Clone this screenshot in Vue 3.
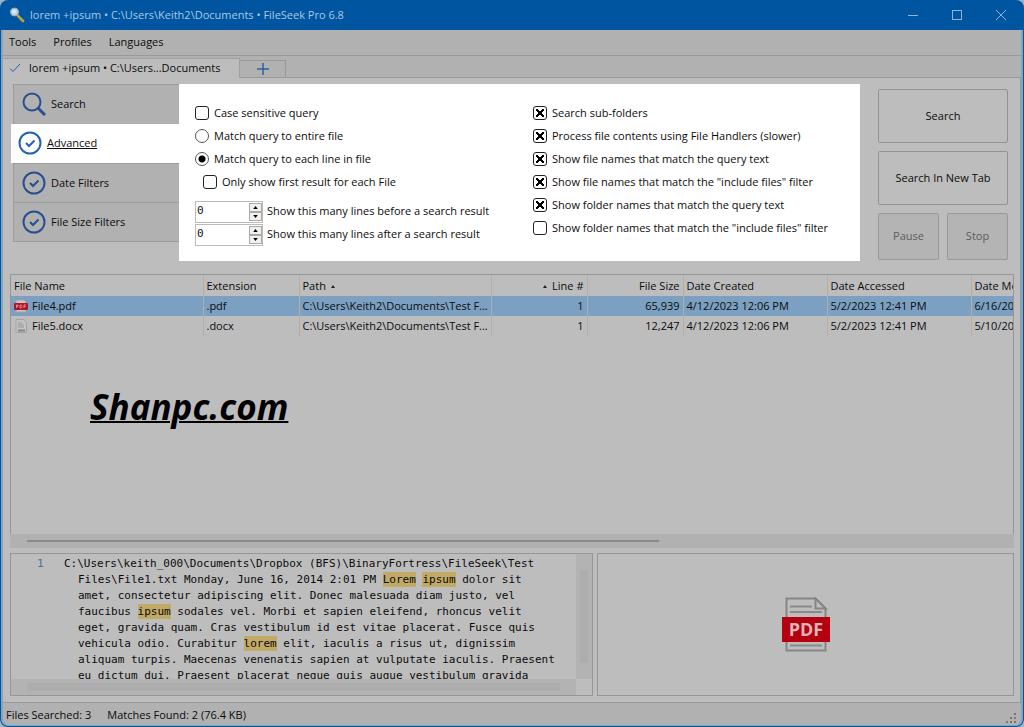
<script setup>
import { ref } from 'vue'

const menus = ['Tools', 'Profiles', 'Languages']
const sections = ['Search', 'Advanced', 'Date Filters', 'File Size Filters']
const active = ref('Advanced')

const caseSensitive = ref(false)
const matchMode = ref('line')
const firstOnly = ref(false)
const before = ref(0)
const after = ref(0)

const options = ref([
  { id: 'sub', label: 'Search sub-folders', on: true },
  { id: 'handlers', label: 'Process file contents using File Handlers (slower)', on: true },
  { id: 'file-query', label: 'Show file names that match the query text', on: true },
  { id: 'file-filter', label: 'Show file names that match the "include files" filter', on: true },
  { id: 'folder-query', label: 'Show folder names that match the query text', on: true },
  { id: 'folder-filter', label: 'Show folder names that match the "include files" filter', on: false }
])

const files = [
  { name: 'File4.pdf', ext: '.pdf', size: '65,939', modified: '6/16/2023', selected: true },
  { name: 'File5.docx', ext: '.docx', size: '12,247', modified: '5/10/2023', selected: false }
]

const lines = [
  'C:\\Users\\keith_000\\Documents\\Dropbox (BFS)\\BinaryFortress\\FileSeek\\Test',
  'Files\\File1.txt Monday, June 16, 2014 2:01 PM *Lorem* *ipsum* dolor sit',
  'amet, consectetur adipiscing elit. Donec malesuada diam justo, vel',
  'faucibus *ipsum* sodales vel. Morbi et sapien eleifend, rhoncus velit',
  'eget, gravida quam. Cras vestibulum id est vitae placerat. Fusce quis',
  'vehicula odio. Curabitur *lorem* elit, iaculis a risus ut, dignissim',
  'aliquam turpis. Maecenas venenatis sapien at vulputate iaculis. Praesent',
  'eu dictum dui. Praesent placerat neque quis augue vestibulum gravida'
].map(line => line.split('*'))
</script>

<template>
  <div class="window">
    <header class="titlebar">
      <svg class="logo" viewBox="0 0 16 16" aria-hidden="true">
        <path d="M9 9l5 5" stroke="#b9a53c" stroke-width="2.6" stroke-linecap="round" />
        <circle cx="5.5" cy="5" r="4" fill="#c3d3de" stroke="#8eaabd" />
        <circle cx="5" cy="4.5" r="2" fill="#dce6ec" />
      </svg>
      <h1>lorem +ipsum • C:\Users\Keith2\Documents • FileSeek Pro 6.8</h1>
      <button type="button" class="caption" aria-label="Minimize">
        <svg viewBox="0 0 12 12"><path d="M1 6.5h10" /></svg>
      </button>
      <button type="button" class="caption" aria-label="Maximize">
        <svg viewBox="0 0 12 12"><rect x="1.5" y="1.5" width="9" height="9" /></svg>
      </button>
      <button type="button" class="caption" aria-label="Close">
        <svg viewBox="0 0 12 12"><path d="M1 1l10 10M11 1L1 11" /></svg>
      </button>
    </header>

    <div class="frame">
      <nav class="menubar">
        <button v-for="m in menus" :key="m" type="button">{{ m }}</button>
      </nav>

      <div class="tabs">
        <button type="button" class="tab current">
          <svg viewBox="0 0 12 12"><path d="M1 6.5l3 3L11 2" /></svg>
          lorem +ipsum • C:\Users...Documents
        </button>
        <button type="button" class="tab add" aria-label="New tab">
          <svg viewBox="0 0 12 12"><path d="M6 0v12M0 6h12" /></svg>
        </button>
        <span class="rest"></span>
      </div>

      <main class="page">
        <section class="query">
          <nav class="side">
            <button
              v-for="s in sections"
              :key="s"
              type="button"
              :class="{ active: s === active }"
              @click="active = s"
            >
              <svg v-if="s === 'Search'" viewBox="0 0 24 24">
                <circle cx="10" cy="10" r="8.500" />
                <path d="M16 16l7 7" class="thick" />
              </svg>
              <svg v-else viewBox="0 0 24 24">
                <circle cx="12" cy="12" r="10.5" />
                <path d="M8 12l3 3 5.500-5.500" />
              </svg>
              <span>{{ s }}</span>
            </button>
          </nav>

          <div class="panel">
            <div class="col">
              <label class="opt"><input v-model="caseSensitive" type="checkbox" />Case sensitive query</label>
              <label class="opt"><input v-model="matchMode" type="radio" name="mode" value="file" />Match query to entire file</label>
              <label class="opt"><input v-model="matchMode" type="radio" name="mode" value="line" />Match query to each line in file</label>
              <label class="opt nested"><input v-model="firstOnly" type="checkbox" />Only show first result for each File</label>
              <div class="spin first">
                <div class="box">
                  <input id="before" v-model="before" type="number" min="0" />
                  <span class="steps">
                    <button type="button" aria-label="More lines before" @click="before++"><svg viewBox="0 0 6 4"><path d="M0 4l3-4 3 4z" /></svg></button>
                    <button type="button" aria-label="Fewer lines before" @click="before > 0 && before--"><svg viewBox="0 0 6 4"><path d="M0 0l3 4 3-4z" /></svg></button>
                  </span>
                </div>
                <label for="before">Show this many lines before a search result</label>
              </div>
              <div class="spin">
                <div class="box">
                  <input id="after" v-model="after" type="number" min="0" />
                  <span class="steps">
                    <button type="button" aria-label="More lines after" @click="after++"><svg viewBox="0 0 6 4"><path d="M0 4l3-4 3 4z" /></svg></button>
                    <button type="button" aria-label="Fewer lines after" @click="after > 0 && after--"><svg viewBox="0 0 6 4"><path d="M0 0l3 4 3-4z" /></svg></button>
                  </span>
                </div>
                <label for="after">Show this many lines after a search result</label>
              </div>
            </div>
            <div class="col">
              <label v-for="o in options" :key="o.id" class="opt"><input v-model="o.on" type="checkbox" />{{ o.label }}</label>
            </div>
          </div>

          <div class="actions">
            <button type="button" class="wide">Search</button>
            <button type="button" class="wide">Search In New Tab</button>
            <button type="button" disabled>Pause</button>
            <button type="button" disabled>Stop</button>
          </div>
        </section>

        <section class="results">
          <table>
            <colgroup>
              <col class="w4" /><col class="w2" /><col class="w4" /><col class="w2" />
              <col class="w2" /><col class="w3" /><col class="w3" /><col class="w3" />
            </colgroup>
            <thead>
              <tr>
                <th>File Name</th>
                <th>Extension</th>
                <th>Path <i class="sort"></i></th>
                <th class="num"><i class="sort"></i> Line #</th>
                <th class="num">File Size</th>
                <th>Date Created</th>
                <th>Date Accessed</th>
                <th>Date Modified</th>
              </tr>
            </thead>
            <tbody>
              <tr v-for="f in files" :key="f.name" :class="{ selected: f.selected }">
                <td>
                  <span class="file">
                    <svg v-if="f.ext === '.pdf'" viewBox="0 0 14 14">
                      <path d="M2 1h8l2 2v10H2z" fill="#c9c6c6" stroke="#a5a0a2" />
                      <rect y="4" width="14" height="7" rx="1" fill="#ae1626" />
                      <path d="M2.5 9V6h1.5v1.5H2.5M6 6v3h1.2l.8-.8V6.700L7.200 6zM10 9V6h2M10 7.500h1.500" fill="none" stroke="#e0a0a6" stroke-width=".8" />
                    </svg>
                    <svg v-else viewBox="0 0 14 14">
                      <path d="M2 .5h7.500L12.500 3v10.500H2z" fill="#c4c4c4" stroke="#a2a2a2" />
                      <path d="M4 4h4M4 6h6M4 8h6" stroke="#969696" />
                      <path d="M4 11.500h7" stroke="#858585" stroke-width="2" />
                    </svg>
                    {{ f.name }}
                  </span>
                </td>
                <td>{{ f.ext }}</td>
                <td>C:\Users\Keith2\Documents\Test F...</td>
                <td class="num">1</td>
                <td class="num">{{ f.size }}</td>
                <td>4/12/2023 12:06 PM</td>
                <td>5/2/2023 12:41 PM</td>
                <td>{{ f.modified }}</td>
              </tr>
              <tr class="blank"><td v-for="n in 8" :key="n"></td></tr>
            </tbody>
          </table>
          <p class="watermark">Shanpc.com</p>
        </section>
        <div class="hscroll"><span></span></div>

        <section class="preview">
          <div class="text">
            <div class="code">
              <span class="lineno">1</span>
              <div class="lines">
                <p v-for="(line, i) in lines" :key="i">
                  <template v-for="(part, j) in line" :key="j"><mark v-if="j % 2">{{ part }}</mark><template v-else>{{ part }}</template></template>
                </p>
              </div>
            </div>
            <div class="vbar"><i></i></div>
            <div class="hbar"><i></i></div>
          </div>
          <div class="picture">
            <svg viewBox="0 0 48 56" role="img" aria-label="PDF file">
              <path d="M4.500 1.500h29l10 10v42h-39z" fill="#bdbdbd" stroke="#858585" stroke-width="2" />
              <path d="M33.500 1.500v10h10z" fill="#bdbdbd" stroke="#858585" stroke-width="2" />
              <path d="M8 9.500h22M8 15h32M8 48.500h32" stroke="#8a8a8a" stroke-width="2" />
              <rect y="20" width="48" height="25" fill="#b4000f" />
              <text x="24" y="39" text-anchor="middle">PDF</text>
            </svg>
          </div>
        </section>
      </main>

      <footer class="status">
        <span>Files Searched: 3</span>
        <span>Matches Found: 2 (76.4 KB)</span>
        <svg class="grip" viewBox="0 0 12 12" aria-hidden="true">
          <path d="M8 0h2v2H8zM4 4h2v2H4zM8 4h2v2H8zM0 8h2v2H0zM4 8h2v2H4zM8 8h2v2H8z" />
        </svg>
      </footer>
    </div>
  </div>
</template>

<style>
html,
body {
  background: #9fb4c8;
}
</style>

<style scoped>
* {
  box-sizing: border-box;
}

.window {
  display: flex;
  flex-direction: column;
  min-height: 100vh;
  overflow: hidden;
  background: #0055a0;
  border-radius: 8px;
  font: 11px/16px "Open Sans", "Noto Sans", sans-serif;
  color: #0c0c0c;
}

button {
  padding: 0;
  border: 0;
  background: none;
  font: inherit;
  color: inherit;
}

.titlebar {
  display: flex;
  align-items: center;
  height: 30px;
  padding: 0 1px 0 9px;
  color: #a9c9e6;
}

.logo {
  width: 16px;
  height: 16px;
  margin-right: 5px;
  fill: none;
}

h1 {
  flex: 1;
  margin: 0;
  font: inherit;
}

.caption {
  width: 44px;
  height: 30px;
}

.caption svg {
  display: block;
  width: 12px;
  height: 12px;
  margin: auto;
  fill: none;
  stroke: #8db5da;
}

.frame {
  display: flex;
  flex: 1;
  flex-direction: column;
  margin: 0 1px 1px;
  border: solid #84a5c0;
  border-width: 0 2px 1px;
  border-radius: 0 0 7px 7px;
  background: #b1b1b1;
}

.menubar {
  display: flex;
  gap: 17px;
  height: 26px;
  padding: 0 6px 2px;
  border-bottom: 1px solid #999;
}

.tabs {
  display: flex;
  align-items: flex-end;
  height: 22px;
}

.tab {
  display: flex;
  align-items: center;
}

.tab svg {
  width: 12px;
  height: 12px;
  fill: none;
  stroke: #2f5f9e;
}

.current {
  gap: 8px;
  width: 237px;
  height: 20px;
  padding: 0 0 2px 6px;
  border: solid #a0a0a0;
  border-width: 1px 1px 0 0;
  background: #bdbdbd;
}

.add {
  justify-content: center;
  width: 46px;
  height: 18px;
  border: solid #999;
  border-width: 1px 1px 1px 0;
}

.add svg {
  stroke-width: 1.5;
}

.rest {
  flex: 1;
  border-bottom: 1px solid #999;
}

.page {
  display: flex;
  flex: 1;
  flex-direction: column;
  padding: 6px 6px 6px 7px;
  border-right: 1px solid #999;
  background: #bdbdbd;
}

.query {
  display: flex;
}

.side {
  flex: 0 0 166px;
  align-self: flex-start;
  margin-left: 3px;
  border: solid #9c9c9c;
  border-width: 1px 0 1px 1px;
  background: #b1b1b1;
}

.side button {
  display: flex;
  align-items: center;
  gap: 5px;
  width: 100%;
  height: 39px;
  padding: 0 0 1px 8px;
  border-top: 1px solid #9c9c9c;
}

.side button:first-child {
  border-top: 0;
}

.side svg {
  width: 24px;
  height: 24px;
  fill: none;
  stroke: #284f8f;
  stroke-width: 2;
}

.side .thick {
  stroke-width: 3;
}

.side .active {
  width: 168px;
  margin-left: -3px;
  padding-left: 7px;
  border: 0;
  background: #fff;
  text-decoration: underline;
}

.active svg {
  stroke: #2563b0;
}

.panel {
  display: grid;
  flex: 1;
  grid-template-columns: 338fr 327fr;
  min-height: 177px;
  padding: 17px 0 0 16px;
  background: #fff;
}

.opt {
  display: flex;
  align-items: center;
  gap: 5px;
  height: 23px;
  white-space: nowrap;
}

.nested {
  margin-left: 8px;
}

.opt input {
  flex: none;
  appearance: none;
  width: 14px;
  height: 14px;
  margin: 0;
  border: 1px solid #222;
  border-radius: 3px;
  background: #fff;
}

.opt input[type="checkbox"]:checked {
  background:
    linear-gradient(45deg, transparent 43%, #000 43% 57%, transparent 57%) center / 8px 8px no-repeat,
    linear-gradient(-45deg, transparent 43%, #000 43% 57%, transparent 57%) center / 8px 8px no-repeat;
  background-color: #fff;
}

.opt input[type="radio"] {
  border-color: #555;
  border-radius: 50%;
}

.opt input[type="radio"]:checked {
  background: radial-gradient(circle, #000 3px, #fff 4px);
}

.spin {
  display: flex;
  align-items: center;
  gap: 4px;
  height: 23px;
  white-space: nowrap;
}

.spin label {
  padding-bottom: 2px;
}

.first {
  margin-top: 7px;
}

.box {
  display: flex;
  width: 68px;
  height: 22px;
  border: 1px solid #bbb;
}

.box input {
  flex: 1;
  appearance: textfield;
  min-width: 0;
  padding: 0 0 2px 1px;
  border: 0;
  background: none;
  font: 11px "DejaVu Sans Mono", monospace;
  color: #111;
}

.box input::-webkit-inner-spin-button {
  display: none;
}

.steps {
  display: grid;
  width: 13px;
  margin: 1px 0 1px;
}

.steps button {
  display: grid;
  place-items: center;
  border: 1px solid #aaa;
  background: #f0f0f0;
}

.steps svg {
  width: 5px;
  height: 3px;
}

.actions {
  display: grid;
  flex: 0 0 130px;
  grid-template-columns: 1fr 1fr;
  grid-template-rows: 54px 54px 47px;
  gap: 8px;
  align-self: start;
  margin: 5px 6px 0 18px;
}

.actions button {
  padding-bottom: 1px;
  border: 1px solid #939393;
  border-radius: 2px;
}

.wide {
  grid-column: span 2;
}

.actions :disabled {
  border-color: #999;
  background: #b4b4b4;
  color: #5c5c5c;
}

.results {
  position: relative;
  display: flex;
  flex: 1;
  min-height: 259px;
  margin-top: 13px;
  overflow: hidden;
  border: solid #969696;
  border-width: 1px 1px 0;
}

table {
  flex: none;
  width: 1104px;
  height: 100%;
  border-collapse: collapse;
  table-layout: fixed;
}

.w2 {
  width: 96px;
}

.w3 {
  width: 144px;
}

.w4 {
  width: 192px;
}

th,
td {
  height: 20px;
  padding: 0 4px 0 3px;
  border-right: 1px solid #afafaf;
  font-weight: 400;
  text-align: left;
  white-space: nowrap;
}

th {
  height: 21px;
}

.num {
  padding-right: 3px;
  text-align: right;
}

.sort {
  display: inline-block;
  margin: 0 2px;
  border: solid transparent;
  border-width: 0 2px 3px;
  border-bottom-color: #222;
  vertical-align: 2px;
}

.selected {
  background: #7ba0c2;
}

.blank td {
  height: auto;
}

.file {
  display: flex;
  align-items: center;
  gap: 4px;
}

.file svg {
  width: 14px;
  height: 14px;
}

.watermark {
  position: absolute;
  top: 108px;
  left: 79px;
  margin: 0;
  font: italic 700 35px/48px "Open Sans", "Noto Sans", sans-serif;
  color: #000;
  text-decoration: underline;
  text-decoration-thickness: 2px;
}

.hscroll {
  height: 14px;
  padding: 6px 355px 0 17px;
  background: #b1b1b1;
}

.hscroll span {
  display: block;
  height: 2px;
  background: #8a8a8a;
}

.preview {
  display: grid;
  grid-template-columns: 583fr 417fr;
  grid-template-rows: minmax(0, 1fr);
  gap: 4px;
  height: 143px;
  margin-top: 5px;
}

.text,
.picture {
  min-width: 0;
  border: 1px solid #969696;
}

.text {
  display: grid;
  grid-template-columns: 1fr 16px;
  grid-template-rows: minmax(0, 1fr) 16px;
}

.code {
  display: flex;
  min-height: 0;
  padding-top: 2px;
  overflow: hidden;
  font: 11px/16px "DejaVu Sans Mono", monospace;
  white-space: nowrap;
}

.lineno {
  flex: 0 0 53px;
  padding-left: 26px;
  color: #3f7891;
}

.lines {
  padding-left: 14px;
}

.lines p {
  margin: 0;
}

.lines p:first-child {
  margin-left: -14px;
}

mark {
  padding: 1px 0;
  background: #c1a966;
  color: inherit;
}

.vbar,
.hbar {
  background: #b3b3b3;
}

.vbar {
  padding: 16px 4px;
}

.hbar {
  padding: 4px 16px;
}

.vbar i,
.hbar i {
  display: block;
  height: 100%;
  background: #adadad;
}

.picture {
  display: grid;
  place-items: center;
}

.picture svg {
  width: 48px;
  height: 56px;
}

.picture text {
  font: 700 18px "Open Sans", "Noto Sans", sans-serif;
  fill: #dfb5b8;
}

.status {
  display: flex;
  align-items: center;
  gap: 16px;
  height: 23px;
  padding: 1px 3px 0;
  border-top: 1px solid #999;
}

.grip {
  align-self: flex-end;
  width: 12px;
  height: 12px;
  margin-left: auto;
  fill: #777;
}
</style>
